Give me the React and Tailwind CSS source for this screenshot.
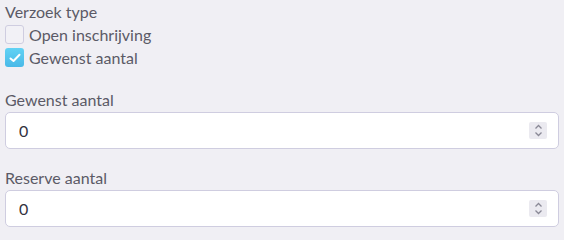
import { useState } from "react";

const NumberField = ({ label, value, onChange }) => (
  <div className="flex flex-col">
    <label className="text-[16px] leading-[20px] text-[#5b5a66] h-[20px]">{label}</label>
    <div className="mt-[2px] flex h-[37px] items-center rounded-[5px] border border-[#cfcde0] bg-white pl-[13px] pr-[11px]">
      <input
        type="text"
        value={value}
        onChange={(e) => onChange(e.target.value)}
        className="flex-1 bg-transparent text-[16px] text-[#33323d] outline-none"
      />
      <div className="flex h-[17px] w-[18px] flex-col items-center justify-center rounded-[2px] bg-[#ebeaf0]">
        <svg width="9" height="13" viewBox="0 0 9 13" fill="none" stroke="#8a8996" strokeWidth="1.3">
          <path d="M1.5 4.5 L4.5 1.5 L7.5 4.5" />
          <path d="M1.5 8.5 L4.5 11.5 L7.5 8.5" />
        </svg>
      </div>
    </div>
  </div>
);

const Check = ({ checked, label, onToggle }) => (
  <label className="flex h-[23px] items-center gap-[5px] cursor-pointer" onClick={onToggle}>
    {checked ? (
      <span className="flex h-[19px] w-[19px] items-center justify-center rounded-[3px] bg-gradient-to-b from-[#62d2f4] to-[#49b9e8]">
        <svg width="12" height="10" viewBox="0 0 12 10" fill="none" stroke="white" strokeWidth="2" strokeLinecap="round" strokeLinejoin="round">
          <path d="M1.5 5.5 L4.5 8 L10.5 1.8" />
        </svg>
      </span>
    ) : (
      <span className="h-[19px] w-[19px] rounded-[3px] border border-[#cfcde0] bg-[#f2f1f6]" />
    )}
    <span className="text-[16px] text-[#5b5a66]">{label}</span>
  </label>
);

export default function App() {
  const [open, setOpen] = useState(false);
  const [gewenst, setGewenst] = useState(true);
  const [aantal, setAantal] = useState("0");
  const [reserve, setReserve] = useState("0");

  return (
    <div className="min-h-screen bg-[#f0eff4] px-[5px] pt-[2px] font-['Lato',sans-serif]">
      <div className="text-[16px] leading-[20px] text-[#5b5a66]">Verzoek type</div>
      <div className="mt-[1px] flex flex-col">
        <Check checked={open} label="Open inschrijving" onToggle={() => setOpen(!open)} />
        <Check checked={gewenst} label="Gewenst aantal" onToggle={() => setGewenst(!gewenst)} />
      </div>
      <div className="mt-[21px] flex flex-col gap-[19px]">
        <NumberField label="Gewenst aantal" value={aantal} onChange={setAantal} />
        <NumberField label="Reserve aantal" value={reserve} onChange={setReserve} />
      </div>
    </div>
  );
}
